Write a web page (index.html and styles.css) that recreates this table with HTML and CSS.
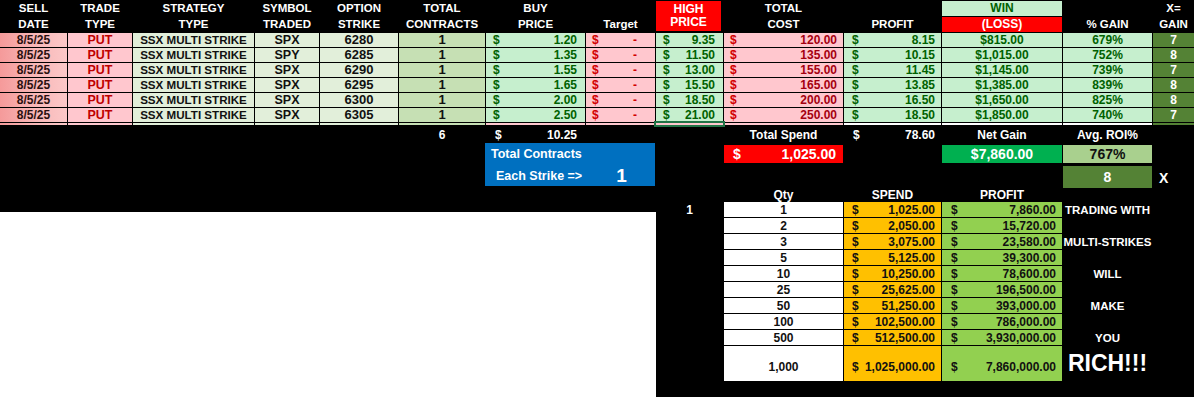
FILE: index.html
```html
<!DOCTYPE html>
<html>
<head>
<meta charset="utf-8">
<link rel="stylesheet" href="styles.css">
</head>
<body>
<div class="sheet">
  <div class="h">SELL</div><div class="h">TRADE</div><div class="h">STRATEGY</div><div class="h">SYMBOL</div><div class="h">OPTION</div><div class="h">TOTAL</div><div class="h">BUY</div><div class="h"></div>
  <div class="h high">HIGH<br>PRICE</div>
  <div class="h">TOTAL</div><div class="h"></div><div class="h win">WIN</div><div class="h"></div><div class="h">X=</div>
  <div class="h">DATE</div><div class="h">TYPE</div><div class="h">TYPE</div><div class="h">TRADED</div><div class="h">STRIKE</div><div class="h">CONTRACTS</div><div class="h">PRICE</div><div class="h">Target</div>
  <div class="h">COST</div><div class="h">PROFIT</div><div class="h loss">(LOSS)</div><div class="h">% GAIN</div><div class="h">GAIN</div>

  <div class="c date">8/5/25</div><div class="c put">PUT</div><div class="c lg strat">SSX MULTI STRIKE</div><div class="c lg">SPX</div><div class="c lg num">6280</div><div class="c ct">1</div>
  <div class="c gm g"><span>$</span><span>1.20</span></div><div class="c rm tg"><span>$</span><span>-</span></div><div class="c gm i"><span>$</span><span>9.35</span></div><div class="c rm j"><span>$</span><span>120.00</span></div><div class="c gm k"><span>$</span><span>8.15</span></div><div class="c gc">$815.00</div><div class="c gc">679%</div><div class="c xg">7</div>

  <div class="c date">8/5/25</div><div class="c put">PUT</div><div class="c lg strat">SSX MULTI STRIKE</div><div class="c lg">SPY</div><div class="c lg num">6285</div><div class="c ct">1</div>
  <div class="c gm g"><span>$</span><span>1.35</span></div><div class="c rm tg"><span>$</span><span>-</span></div><div class="c gm i"><span>$</span><span>11.50</span></div><div class="c rm j"><span>$</span><span>135.00</span></div><div class="c gm k"><span>$</span><span>10.15</span></div><div class="c gc">$1,015.00</div><div class="c gc">752%</div><div class="c xg">8</div>

  <div class="c date">8/5/25</div><div class="c put">PUT</div><div class="c lg strat">SSX MULTI STRIKE</div><div class="c lg">SPX</div><div class="c lg num">6290</div><div class="c ct">1</div>
  <div class="c gm g"><span>$</span><span>1.55</span></div><div class="c rm tg"><span>$</span><span>-</span></div><div class="c gm i"><span>$</span><span>13.00</span></div><div class="c rm j"><span>$</span><span>155.00</span></div><div class="c gm k"><span>$</span><span>11.45</span></div><div class="c gc">$1,145.00</div><div class="c gc">739%</div><div class="c xg">7</div>

  <div class="c date">8/5/25</div><div class="c put">PUT</div><div class="c lg strat">SSX MULTI STRIKE</div><div class="c lg">SPX</div><div class="c lg num">6295</div><div class="c ct">1</div>
  <div class="c gm g"><span>$</span><span>1.65</span></div><div class="c rm tg"><span>$</span><span>-</span></div><div class="c gm i"><span>$</span><span>15.50</span></div><div class="c rm j"><span>$</span><span>165.00</span></div><div class="c gm k"><span>$</span><span>13.85</span></div><div class="c gc">$1,385.00</div><div class="c gc">839%</div><div class="c xg">8</div>

  <div class="c date">8/5/25</div><div class="c put">PUT</div><div class="c lg strat">SSX MULTI STRIKE</div><div class="c lg">SPX</div><div class="c lg num">6300</div><div class="c ct">1</div>
  <div class="c gm g"><span>$</span><span>2.00</span></div><div class="c rm tg"><span>$</span><span>-</span></div><div class="c gm i"><span>$</span><span>18.50</span></div><div class="c rm j"><span>$</span><span>200.00</span></div><div class="c gm k"><span>$</span><span>16.50</span></div><div class="c gc">$1,650.00</div><div class="c gc">825%</div><div class="c xg">8</div>

  <div class="c date">8/5/25</div><div class="c put">PUT</div><div class="c lg strat">SSX MULTI STRIKE</div><div class="c lg">SPX</div><div class="c lg num">6305</div><div class="c ct">1</div>
  <div class="c gm g"><span>$</span><span>2.50</span></div><div class="c rm tg"><span>$</span><span>-</span></div><div class="c gm i"><span>$</span><span>21.00</span></div><div class="c rm j"><span>$</span><span>250.00</span></div><div class="c gm k"><span>$</span><span>18.50</span></div><div class="c gc">$1,850.00</div><div class="c gc">740%</div><div class="c xg">7</div>

  <div class="c p date"></div><div class="c p put"></div><div class="c p lg"></div><div class="c p lg"></div><div class="c p lg"></div><div class="c p ct"></div>
  <div class="c p rm"></div><div class="c p rm"></div><div class="c p rm sel"></div><div class="c p rm"></div><div class="c p wm"></div><div class="c p wc"></div><div class="c p wc"></div><div class="c p xg"></div>
</div>

<div class="bottom">
  <div class="left">
    <div class="lgrid">
      <div class="tot f6">6</div>
      <div class="tot g7"><span>$</span><span>10.25</span></div>
      <div class="blue">
        <div class="bl1">Total Contracts</div>
        <div class="bl2"><span class="each">Each Strike =&gt;</span><span class="one">1</span></div>
      </div>
    </div>
    <div class="white"></div>
  </div>

  <div class="right">
    <div></div><div class="tw">Total Spend</div><div class="tw mon"><span>$</span><span>78.60</span></div><div class="tw">Net Gain</div><div class="tw">Avg. ROI%</div><div></div>

    <div></div><div class="big red"><span>$</span><span>1,025.00</span></div><div></div><div class="big ng">$7,860.00</div><div class="big roi">767%</div><div></div>

    <div></div><div></div><div></div><div></div><div class="big eight">8</div><div class="xx">X</div>

    <div></div><div class="tw">Qty</div><div class="tw">SPEND</div><div class="tw">PROFIT</div><div></div><div></div>

    <div class="tw">1</div><div class="q">1</div><div class="sp"><span>$</span><span>1,025.00</span></div><div class="pr"><span>$</span><span>7,860.00</span></div><div class="msg">TRADING WITH</div><div></div>
    <div></div><div class="q">2</div><div class="sp"><span>$</span><span>2,050.00</span></div><div class="pr"><span>$</span><span>15,720.00</span></div><div></div><div></div>
    <div></div><div class="q">3</div><div class="sp"><span>$</span><span>3,075.00</span></div><div class="pr"><span>$</span><span>23,580.00</span></div><div class="msg">MULTI-STRIKES</div><div></div>
    <div></div><div class="q">5</div><div class="sp"><span>$</span><span>5,125.00</span></div><div class="pr"><span>$</span><span>39,300.00</span></div><div></div><div></div>
    <div></div><div class="q">10</div><div class="sp"><span>$</span><span>10,250.00</span></div><div class="pr"><span>$</span><span>78,600.00</span></div><div class="msg">WILL</div><div></div>
    <div></div><div class="q">25</div><div class="sp"><span>$</span><span>25,625.00</span></div><div class="pr"><span>$</span><span>196,500.00</span></div><div></div><div></div>
    <div></div><div class="q">50</div><div class="sp"><span>$</span><span>51,250.00</span></div><div class="pr"><span>$</span><span>393,000.00</span></div><div class="msg">MAKE</div><div></div>
    <div></div><div class="q">100</div><div class="sp"><span>$</span><span>102,500.00</span></div><div class="pr"><span>$</span><span>786,000.00</span></div><div></div><div></div>
    <div></div><div class="q">500</div><div class="sp"><span>$</span><span>512,500.00</span></div><div class="pr"><span>$</span><span>3,930,000.00</span></div><div class="msg">YOU</div><div></div>
    <div></div><div class="q last">1,000</div><div class="sp last"><span>$</span><span>1,025,000.00</span></div><div class="pr last"><span>$</span><span>7,860,000.00</span></div><div class="rich">RICH!!!</div><div></div>
  </div>
</div>
</body>
</html>
```

FILE: styles.css
```css
* { box-sizing: border-box; }
html, body { margin: 0; padding: 0; }
body {
  width: 1194px;
  height: 397px;
  overflow: hidden;
  background: #000;
  font-family: "Liberation Sans", Arial, sans-serif;
  font-weight: bold;
  font-size: 12px;
  color: #fff;
}

.sheet {
  display: grid;
  grid-template-columns: 67px 64px 121px 64px 78px 86px 99px 69px 67px 119px 97px 120px 89px 41px;
  grid-template-rows: 16px 15px repeat(6, 14px) 2px;
  column-gap: 1px;
  row-gap: 1px;
  background: #000;
}

.h {
  display: flex;
  align-items: center;
  justify-content: center;
  color: #fff;
  font-size: 11.5px;
  line-height: 13px;
  white-space: nowrap;
}
.high {
  grid-row: span 2;
  background: #ff0000;
  text-align: center;
  margin: 1px 2px 1px 0;
  font-size: 12px;
}
.win { background: #c6efce; color: #006100; margin-top: 1px; font-size: 12px; }
.loss { background: #ff0000; color: #fff; font-size: 12px; }

.c {
  display: flex;
  align-items: center;
  justify-content: center;
  white-space: nowrap;
  overflow: hidden;
  line-height: 14px;
  color: #111;
}
.date { background: linear-gradient(90deg, #f59a9a 0%, #f8b8b8 55%, #fcc8c8 100%); color: #2a1010; }
.put { background: #ffc7ce; color: #c00000; font-size: 12.5px; }
.lg { background: #e2efda; font-size: 12.5px; }
.lg.strat { font-size: 11.6px; }
.lg.num { font-size: 13px; }
.ct { background: #c6e0b4; font-size: 13px; }
.gm, .rm, .wm { justify-content: space-between; }
.gm { background: #c6efce; color: #006100; }
.rm { background: #ffc7ce; color: #a50010; }
.rm span:first-child { color: #d20000; }
.wm { background: #fff; }
.gc { background: #c6efce; color: #006100; }
.wc { background: #fff; }
.xg { background: #548235; color: #fff; }
.tg { padding: 0 18px 0 6px; color: #d20000; }
.g { padding: 0 8px 0 7px; }
.i { padding: 0 8px 0 7px; }
.j { padding: 0 6px 0 6px; }
.k { padding: 0 6px 0 8px; }

.sel { box-shadow: 0 0 0 2px #217346; position: relative; z-index: 1; }

.bottom {
  display: flex;
  height: 272px;
}
.left {
  width: 656px;
  display: flex;
  flex-direction: column;
}
.lgrid {
  height: 87px;
  background: #000;
  display: grid;
  grid-template-columns: 67px 64px 121px 64px 78px 86px 99px 69px;
  grid-template-rows: 18px 43px;
  column-gap: 1px;
}
.white { flex: 1; background: #fff; }

.tot {
  display: flex;
  align-items: center;
  justify-content: center;
  color: #fff;
  padding-top: 2px;
}
.f6 { grid-column: 6; grid-row: 1; }
.g7 { grid-column: 7; grid-row: 1; justify-content: space-between; padding: 2px 8px 0 9px; }

.blue {
  grid-column: 7 / span 2;
  grid-row: 2;
  margin-left: -1px;
  background: #0070c0;
  color: #fff;
  display: grid;
  grid-template-rows: 22px 21px;
}
.bl1 { display: flex; align-items: center; padding-left: 6px; font-size: 12.5px; }
.bl2 { display: flex; align-items: center; padding-left: 11px; }
.each { font-size: 12.5px; }
.one { font-size: 19px; margin-left: 34px; }

.right {
  width: 538px;
  display: grid;
  grid-template-columns: 67px 119px 97px 120px 89px 41px;
  grid-template-rows: 19px 18px 24px 12px repeat(9, 15px) 35px;
  column-gap: 1px;
  row-gap: 1px;
  align-content: start;
}
.tw {
  display: flex;
  align-items: center;
  justify-content: center;
  color: #fff;
  white-space: nowrap;
}
.tw.mon { justify-content: space-between; padding: 0 6px 0 9px; }
.big {
  display: flex;
  align-items: center;
  justify-content: center;
  font-size: 14px;
  color: #fff;
}
.red { background: #ff0000; justify-content: space-between; padding: 0 7px 0 9px; }
.ng { background: #00b050; }
.roi { background: #a9d08e; color: #111; }
.eight { background: #548235; align-self: end; height: 22px; }
.xx { display: flex; align-items: center; padding: 3px 0 0 6px; font-size: 14px; }

.q, .sp, .pr {
  display: flex;
  align-items: center;
  justify-content: center;
  color: #111;
  white-space: nowrap;
}
.q { background: #fff; }
.sp { background: #ffc000; justify-content: space-between; padding: 0 6px 0 8px; }
.pr { background: #92d050; justify-content: space-between; padding: 0 6px 0 9px; }
.last { align-items: flex-end; padding-bottom: 7px; }

.msg {
  display: flex;
  align-items: center;
  justify-content: center;
  font-size: 11.5px;
  white-space: nowrap;
  color: #fff;
}
.rich {
  display: flex;
  align-items: center;
  justify-content: center;
  font-size: 23px;
  color: #fff;
  white-space: nowrap;
}
```
